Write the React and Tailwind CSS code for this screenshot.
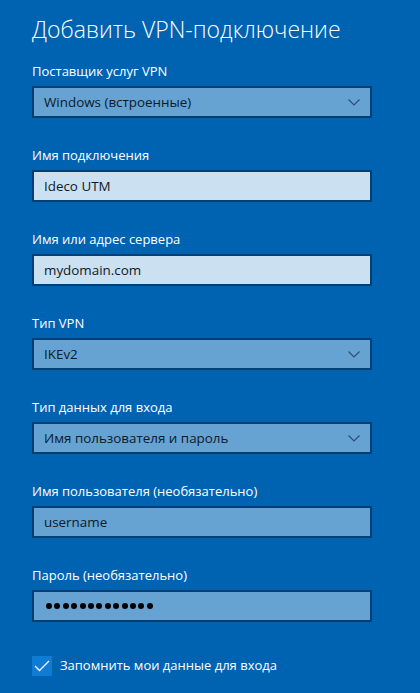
const Chevron = () => (
  <svg width="12" height="7" viewBox="0 0 12 7" className="shrink-0">
    <polyline points="0.5,0.5 6,6 11.5,0.5" fill="none" stroke="#2d4f74" strokeWidth="1.2" />
  </svg>
);

const Label = ({ children }) => (
  <div className="text-[13px] leading-5 text-white mb-[5px]">{children}</div>
);

const Select = ({ value }) => (
  <div className="h-8 w-[340px] border-2 border-[#003f74] bg-[#66a3d2] flex items-center justify-between pl-[10px] pr-[10px] text-[13.4px] text-[#0b1a2a]">
    <span>{value}</span>
    <Chevron />
  </div>
);

const Input = ({ value, light }) => (
  <div
    className={
      "h-8 w-[340px] border-2 border-[#003f74] flex items-center pl-[10px] text-[13.4px] text-[#0b1a2a] " +
      (light ? "bg-[#cbe0f0]" : "bg-[#66a3d2]")
    }
  >
    {value}
  </div>
);

const Field = ({ label, children }) => (
  <div className="mt-[27px] first:mt-0">
    <Label>{label}</Label>
    {children}
  </div>
);

export default function App() {
  return (
    <div className="w-[420px] h-[693px] bg-[#0063b1] px-8 pt-[15px] overflow-hidden font-['Segoe_UI','Open_Sans',sans-serif]">
      <h1 className="text-[23px] font-light leading-7 text-white mb-[18px]">Добавить VPN-подключение</h1>
      <div className="flex flex-col">
        <Field label="Поставщик услуг VPN">
          <Select value="Windows (встроенные)" />
        </Field>
        <Field label="Имя подключения">
          <Input value="Ideco UTM" light />
        </Field>
        <Field label="Имя или адрес сервера">
          <Input value="mydomain.com" light />
        </Field>
        <Field label="Тип VPN">
          <Select value="IKEv2" />
        </Field>
        <Field label="Тип данных для входа">
          <Select value="Имя пользователя и пароль" />
        </Field>
        <Field label="Имя пользователя (необязательно)">
          <Input value="username" />
        </Field>
        <Field label="Пароль (необязательно)">
          <div className="h-8 w-[340px] border-2 border-[#003f74] bg-[#66a3d2] flex items-center pl-[12px] gap-[2.4px]">
            {Array.from({ length: 13 }).map((_, i) => (
              <div key={i} className="w-[6px] h-[6px] rounded-full bg-black" />
            ))}
          </div>
        </Field>
        <div className="mt-[34px] flex items-center gap-2">
          <div className="w-5 h-5 bg-[#0f7bd5] flex items-center justify-center">
            <svg width="16" height="12" viewBox="0 0 16 12">
              <polyline points="1,6 5.5,10.5 15,1" fill="none" stroke="white" strokeWidth="1.3" />
            </svg>
          </div>
          <span className="text-[13px] text-white">Запомнить мои данные для входа</span>
        </div>
      </div>
    </div>
  );
}
